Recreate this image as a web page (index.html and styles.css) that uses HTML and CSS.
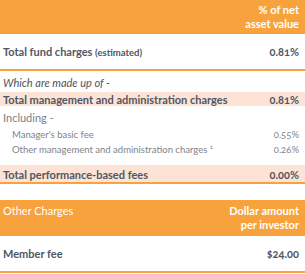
FILE: index.html
```html
<!DOCTYPE html>
<html>
<head>
<meta charset="utf-8">
<link rel="stylesheet" href="styles.css">
</head>
<body>
<div class="fees">
  <div class="hdr">
    <span class="hl"></span>
    <span class="hr">% of net<br>asset value</span>
  </div>
  <div class="row main line">
    <span>Total fund charges <small>(estimated)</small></span>
    <span>0.81%</span>
  </div>
  <div class="row note">
    <span>Which are made up of -</span>
  </div>
  <div class="row band">
    <span>Total management and administration charges</span>
    <span>0.81%</span>
  </div>
  <div class="row incl">
    <span>Including -</span>
  </div>
  <div class="row sub">
    <span>Manager's basic fee</span>
    <span>0.55%</span>
  </div>
  <div class="row sub sub2">
    <span>Other management and administration charges <sup>1</sup></span>
    <span>0.26%</span>
  </div>
  <div class="row band perf line">
    <span>Total performance-based fees</span>
    <span>0.00%</span>
  </div>
  <div class="hdr hdr2">
    <span class="hl">Other Charges</span>
    <span class="hr">Dollar amount<br>per investor</span>
  </div>
  <div class="row main line">
    <span>Member fee</span>
    <span>$24.00</span>
  </div>
</div>
</body>
</html>
```
FILE: styles.css
```css
html, body {
  margin: 0;
  padding: 0;
  background: #fff;
}
.fees {
  width: 305px;
  font-family: Lato, "Open Sans", sans-serif;
  font-variant-numeric: oldstyle-nums;
  color: #505664;
  font-size: 11px;
}
.hdr {
  background: #f8a23d;
  color: #fff;
  font-weight: 700;
  height: 34px;
  box-sizing: border-box;
  padding: 3px 6px 0 3px;
  line-height: 14px;
  display: flex;
  justify-content: space-between;
  align-items: flex-start;
}
.hdr .hr {
  text-align: right;
}
.hdr2 {
  margin-top: 16px;
  height: 36px;
  padding-top: 4px;
}
.hdr2 .hl {
  font-weight: 400;
}
.row {
  display: flex;
  justify-content: space-between;
  align-items: center;
  padding: 0 6px 0 3px;
  box-sizing: border-box;
}
.line {
  border-bottom: 2px solid #f8a23d;
}
.main {
  height: 37px;
  font-weight: 700;
}
.main small {
  font-size: 9.5px;
  font-weight: 700;
}
.note {
  height: 21px;
  font-style: italic;
  color: #4f5460;
  padding-top: 1px;
}
.band {
  background: #fde3d5;
  height: 14px;
  font-weight: 700;
}
.incl {
  height: 18px;
  color: #7b7f86;
  font-size: 11px;
  padding-top: 4px;
}
.sub {
  height: 17px;
  padding-left: 12px;
  font-size: 9.5px;
  color: #80848b;
  padding-top: 4px;
}
.sub2 {
  height: 16px;
  padding-top: 0;
}
.sub sup {
  font-size: 6px;
  vertical-align: 4px;
  line-height: 0;
}
.perf {
  margin-top: 8px;
  height: 19px;
  padding-top: 1px;
}
```
